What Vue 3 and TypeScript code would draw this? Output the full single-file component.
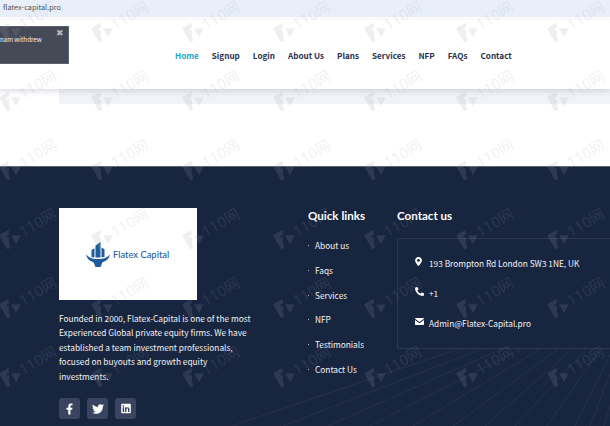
<template>
  <div class="page">
    <div class="address-bar">flatex-capital.pro</div>
    <header class="site-header">
      <nav class="main-nav">
        <a v-for="(link, i) in navLinks" :key="link" class="nav-link" :class="{ active: i === 0 }">{{ link }}</a>
      </nav>
    </header>
    <div class="hero-strip"></div>
    <div class="blank-area"></div>

    <footer class="site-footer">
      <!-- background rays -->
      <svg class="rays" width="610" height="260" viewBox="0 166 610 260">
        <line
          v-for="x in rayEnds"
          :key="x"
          x1="644"
          y1="286"
          :x2="x"
          y2="426"
          stroke="#ffffff"
          stroke-opacity="0.06"
          stroke-width="1"
        />
      </svg>

      <div class="col-about">
        <div class="logo-box">
          <svg class="logo-mark" width="24" height="25" viewBox="0 0 24 25">
            <path d="M0 12.5c3 3.2 6 4.6 12 4.6s9-1.400 12-4.600c-1 4.400-4 7-7.500 7.800L14.500 25h-5l-2-4.700C4 19.500 1 16.900 0 12.500z" fill="#1f5c9e" />
            <path d="M9.500 3.500 14.500 0v15.500h-5zM5.500 8l3-1.800v9h-3zM15.500 5.500l3 1.800v7.500l-3 .7z" fill="#1f5c9e" />
          </svg>
          <span class="logo-text">Flatex Capital</span>
        </div>
        <p class="about-text">
          Founded in 2000, Flatex-Capital is one of the most Experienced Global private equity firms. We have established a team investment professionals, focused on buyouts and growth equity investments.
        </p>
        <div class="socials">
          <a class="social-btn">
            <svg width="7" height="12" viewBox="0 0 320 512"><path fill="#fff" d="M279.14 288l14.22-92.66h-88.91v-60.13c0-25.35 12.42-50.06 52.24-50.06h40.42V6.26S260.43 0 225.36 0c-73.22 0-121.08 44.38-121.08 124.72v70.62H22.89V288h81.39v224h100.17V288z" /></svg>
          </a>
          <a class="social-btn">
            <svg width="12" height="12" viewBox="0 0 512 512"><path fill="#fff" d="M459.37 151.716c.325 4.548.325 9.097.325 13.645 0 138.72-105.583 298.558-298.558 298.558-59.452 0-114.68-17.219-161.137-47.106 8.447.974 16.568 1.299 25.34 1.299 49.055 0 94.213-16.568 130.274-44.832-46.132-.975-84.792-31.188-98.112-72.772 6.498.974 12.995 1.624 19.818 1.624 9.421 0 18.843-1.3 27.614-3.573-48.081-9.747-84.143-51.98-84.143-102.985v-1.299c13.969 7.797 30.214 12.67 47.431 13.319-28.264-18.843-46.781-51.005-46.781-87.391 0-19.492 5.197-37.36 14.294-52.954 51.655 63.675 129.3 105.258 216.365 109.807-1.624-7.797-2.599-15.918-2.599-24.04 0-57.828 46.782-104.934 104.934-104.934 30.213 0 57.502 12.67 76.67 33.137 23.715-4.548 46.456-13.32 66.599-25.34-7.798 24.366-24.366 44.833-46.132 57.827 21.117-2.273 41.584-8.122 60.426-16.243-14.292 20.791-32.161 39.308-52.628 54.253z" /></svg>
          </a>
          <a class="social-btn">
            <svg width="10" height="11" viewBox="0 0 448 512"><path fill="#fff" d="M416 32H31.900C14.300 32 0 46.500 0 64.300v383.400C0 465.500 14.300 480 31.900 480H416c17.600 0 32-14.500 32-32.300V64.300c0-17.800-14.400-32.300-32-32.300zM135.400 416H69V202.200h66.500V416zm-33.200-243c-21.300 0-38.500-17.300-38.500-38.500S80.900 96 102.200 96c21.200 0 38.500 17.300 38.500 38.500 0 21.300-17.200 38.500-38.500 38.500zm282.100 243h-66.400V312c0-24.800-.5-56.700-34.500-56.700-34.600 0-39.900 27-39.900 54.900V416h-66.400V202.200h63.700v29.200h.9c8.900-16.800 30.600-34.500 62.900-34.500 67.200 0 79.700 44.300 79.700 101.900V416z" /></svg>
          </a>
        </div>
      </div>

      <div class="col-links">
        <h3 class="col-title">Quick links</h3>
        <ul class="quick-links">
          <li v-for="link in quickLinks" :key="link">{{ link }}</li>
        </ul>
      </div>

      <div class="col-contact">
        <h3 class="col-title">Contact us</h3>
        <div class="contact-panel">
          <div class="contact-row">
            <span class="icon-cell"><svg width="7" height="9" viewBox="0 0 384 512"><path fill="#fff" d="M172.268 501.670C26.970 291.031 0 269.413 0 192 0 85.961 85.961 0 192 0s192 85.961 192 192c0 77.413-26.970 99.031-172.268 309.670-9.535 13.774-29.930 13.773-39.464 0zM192 272c44.183 0 80-35.817 80-80s-35.817-80-80-80-80 35.817-80 80 35.817 80 80 80z" /></svg></span>
            <span>193 Brompton Rd London SW3 1NE, UK</span>
          </div>
          <div class="contact-row">
            <span class="icon-cell"><svg class="phone" width="9" height="9" viewBox="0 0 512 512"><path fill="#fff" d="M493.400 24.600l-104-24c-11.300-2.600-22.900 3.300-27.500 13.900l-48 112c-4.200 9.800-1.400 21.300 6.900 28l60.600 49.600c-36 76.700-98.900 140.500-177.200 177.200l-49.600-60.600c-6.800-8.300-18.200-11.100-28-6.900l-112 48C3.900 366.500-2 378.100.6 389.400l24 104C27.100 504.200 36.700 512 48 512c256.100 0 464-207.500 464-464 0-11.200-7.700-20.900-18.600-23.400z" /></svg></span>
            <span>+1</span>
          </div>
          <div class="contact-row">
            <span class="icon-cell"><svg width="9" height="7" viewBox="0 0 18 14"><path fill="#fff" d="M0 1.500C0 .7.700 0 1.500 0h15c.8 0 1.500.7 1.500 1.500L9 8 0 1.500zM0 3.800V12.500c0 .8.700 1.500 1.500 1.500h15c.8 0 1.500-.7 1.500-1.500V3.800L9 10.300 0 3.800z" /></svg></span>
            <span>Admin@Flatex-Capital.pro</span>
          </div>
        </div>
      </div>
    </footer>

    <!-- withdrawal toast, slid partly off the left edge -->
    <div class="toast">
      <span class="toast-text">nam withdrew</span>
      <span class="toast-close">✖</span>
    </div>

    <!-- image host watermark over the whole shot -->
    <div class="watermarks">
      <div v-for="n in 56" :key="n" class="mark">
        <svg width="19" height="17" viewBox="0 0 19 17">
          <path d="M2 0h9.500L9 4.500H6.500L5.500 6.500H8L5 11.500 3.500 17H2a2 2 0 0 1-2-2V2a2 2 0 0 1 2-2zM10.500 6.500 19 11l-8.500 5.500z" />
        </svg>
        <span>110网</span>
      </div>
    </div>
  </div>
</template>

<script setup lang="ts">
const navLinks = ['Home', 'Signup', 'Login', 'About Us', 'Plans', 'Services', 'NFP', 'FAQs', 'Contact']
const quickLinks = ['About us', 'Faqs', 'Services', 'NFP', 'Testimonials', 'Contact Us']

// where each ray meets the bottom edge of the page
const rayEnds = [232, 283, 328, 370, 413, 453, 485, 515, 547, 575, 590, 604]
</script>

<style>
html,
body {
  margin: 0;
  overflow: hidden;
}
</style>

<style scoped>
.page {
  position: relative;
  width: 610px;
  height: 426px;
  overflow: hidden;
  background: #fff;
  font-family: "Noto Sans CJK SC", "Noto Sans", sans-serif;
}

.address-bar {
  height: 17px;
  line-height: 15px;
  padding-left: 3px;
  background: #e9eff8;
  color: #4a4f58;
  font-size: 7.3px;
  border-bottom: 3px solid #fff;
  box-shadow: 0 1px 0 #e6ebf3;
}

.site-header {
  position: relative;
  z-index: 1;
  height: 69px;
  display: flex;
  align-items: center;
  padding-left: 175px;
  background: #fff;
  box-shadow: 0 2px 6px rgba(30, 40, 70, 0.16);
}

.main-nav {
  display: flex;
  gap: 13px;
  margin-top: 1px;
}

.nav-link {
  color: #27314d;
  font-size: 8.15px;
  font-weight: 700;
}

.nav-link.active {
  color: #18a5c4;
}

.hero-strip {
  height: 15px;
  margin-left: 59px;
  background: #f2f3f8;
  border-bottom-left-radius: 3px;
}

.blank-area {
  height: 62px;
}

.site-footer {
  position: relative;
  height: 260px;
  display: flex;
  padding: 41px 0 0 59px;
  box-sizing: border-box;
  background: #18253f;
  border-top: 1px solid #5a6478;
  color: #fff;
}

.rays {
  position: absolute;
  left: 0;
  top: -1px;
}

.col-about,
.col-links,
.col-contact {
  position: relative;
  flex: none;
}

.col-about {
  width: 194px;
  margin-right: 55px;
}

.logo-box {
  width: 138px;
  height: 92px;
  display: flex;
  align-items: center;
  padding-left: 27px;
  gap: 3px;
  box-sizing: border-box;
  background: #fff;
}

.logo-text {
  color: #1f5c9e;
  font-family: Lato, sans-serif;
  font-size: 9.4px;
  font-weight: 500;
}

.about-text {
  margin: 11px 0 0;
  font-size: 8.3px;
  line-height: 14.4px;
  color: #f2f3f5;
}

.socials {
  display: flex;
  gap: 7px;
  margin-top: 15px;
}

.social-btn {
  width: 21px;
  height: 21px;
  display: flex;
  align-items: center;
  justify-content: center;
  border-radius: 3px;
  background: #394560;
}

.col-title {
  margin: 0;
  font-family: Lato, sans-serif;
  font-size: 11.6px;
  line-height: 15px;
  font-weight: 700;
  color: #fff;
}

.col-links {
  width: 89px;
}

.quick-links {
  list-style: none;
  margin: 10px 0 0;
  padding: 0;
}

.quick-links li {
  position: relative;
  height: 24.8px;
  line-height: 24.8px;
  padding-left: 7px;
  font-size: 8.3px;
  color: #f2f3f5;
}

.quick-links li::before {
  content: "";
  position: absolute;
  left: 0;
  top: 12px;
  width: 1px;
  height: 1px;
  background: #aab0bd;
}

.contact-panel {
  width: 240px;
  height: 111px;
  margin-top: 15px;
  padding: 9px 0 0 17px;
  box-sizing: border-box;
  border: 1px solid rgba(255, 255, 255, 0.09);
  border-radius: 2px;
  background: #18253f;
}

.contact-row {
  height: 30px;
  display: flex;
  align-items: center;
  font-size: 8.3px;
  color: #f2f3f5;
}

.icon-cell {
  width: 14px;
  flex: none;
  display: flex;
  margin-top: -3px;
}

.phone {
  transform: scaleX(-1);
}

.toast {
  position: absolute;
  z-index: 2;
  left: -20px;
  top: 26px;
  width: 89px;
  height: 38px;
  box-sizing: border-box;
  padding: 7px 0 0 19px;
  background: #464a56;
  border: 1px solid #5c606b;
  color: #f1f2f4;
  font-size: 6.2px;
  line-height: 12px;
}

.toast-close {
  position: absolute;
  right: 4px;
  top: 0;
  font-size: 9px;
  color: #b6b8be;
}

.watermarks {
  position: absolute;
  z-index: 3;
  left: -87px;
  top: -66px;
  display: grid;
  grid-template-columns: repeat(8, 91.3px);
  grid-auto-rows: 69px;
  pointer-events: none;
}

.mark {
  width: 62px;
  height: 35px;
  margin-left: -6px;
  display: flex;
  align-items: center;
  justify-content: center;
  gap: 1px;
  color: rgba(151, 160, 170, 0.16);
  font-family: "Noto Sans", "Noto Sans CJK SC", sans-serif;
  font-size: 15px;
  line-height: 1;
  white-space: nowrap;
  transform: rotate(-30deg);
}

.mark svg {
  flex: none;
  fill: rgba(151, 160, 170, 0.17);
}
</style>
